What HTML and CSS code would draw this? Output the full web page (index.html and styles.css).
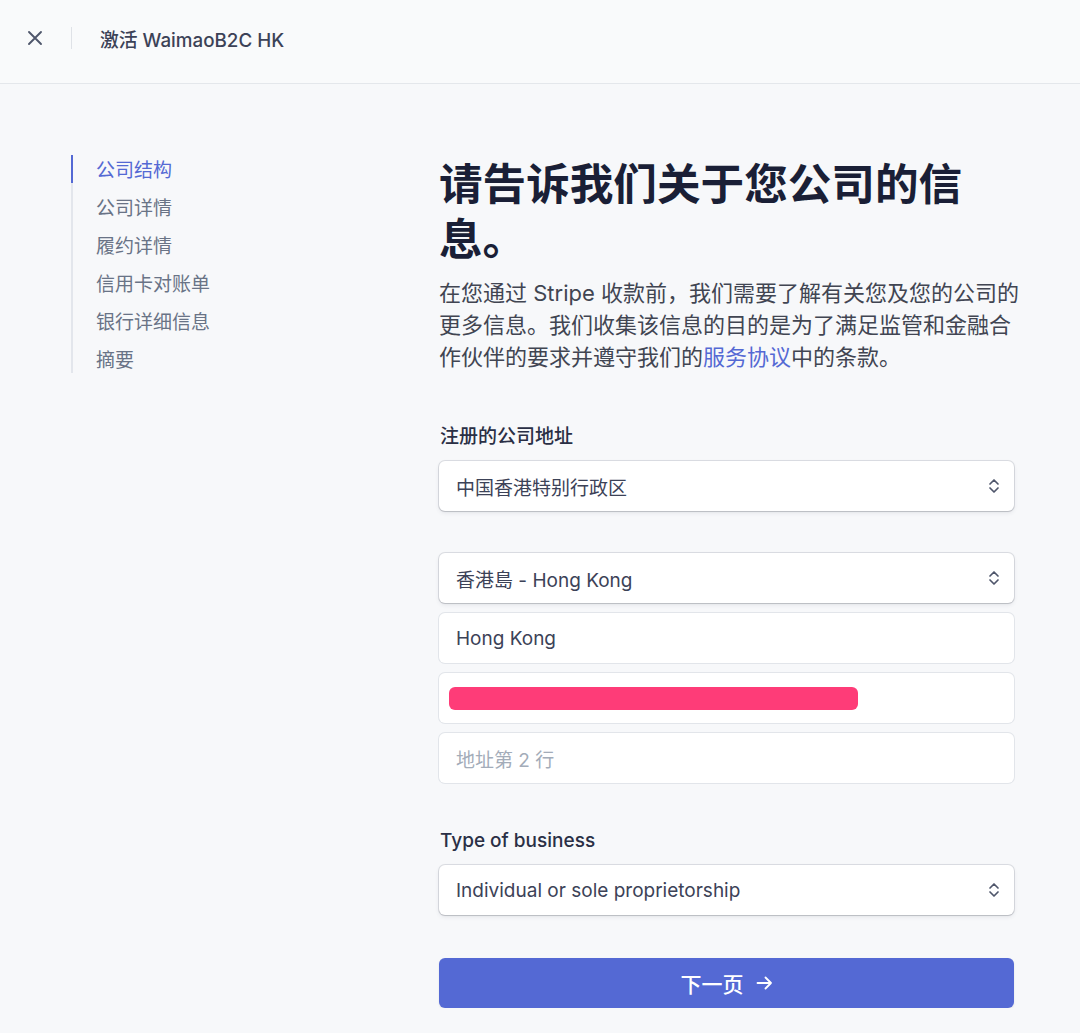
FILE: index.html
```html
<!DOCTYPE html>
<html lang="zh-CN">
<head>
<meta charset="utf-8">
<title>激活 WaimaoB2C HK</title>
<link rel="stylesheet" href="styles.css">
</head>
<body>
<header class="topbar">
  <span class="close-btn" aria-label="关闭">
    <svg width="16" height="16" viewBox="0 0 16 16"><path d="M2 2 L14 14 M14 2 L2 14" stroke="#4f566b" stroke-width="1.9" stroke-linecap="round" fill="none"/></svg>
  </span>
  <span class="divider"></span>
  <span class="title">激活 WaimaoB2C HK</span>
</header>
<div class="layout">
  <nav class="steps">
    <div class="step active">公司结构</div>
    <div class="step">公司详情</div>
    <div class="step">履约详情</div>
    <div class="step">信用卡对账单</div>
    <div class="step">银行详细信息</div>
    <div class="step">摘要</div>
  </nav>
  <main class="content">
    <h1 class="heading">请告诉我们关于您公司的信<br>息。</h1>
    <p class="intro">在您通过 Stripe 收款前，我们需要了解有关您及您的公司的<br>更多信息。我们收集该信息的目的是为了满足监管和金融合<br>作伙伴的要求并遵守我们的<a class="link" href="#">服务协议</a>中的条款。</p>

    <div class="label label-first">注册的公司地址</div>
    <div class="field select">
      <span>中国香港特别行政区</span>
      <svg class="chev" width="12" height="18" viewBox="0 0 12 18"><path d="M2 7 L6 3 L10 7 M2 11 L6 15 L10 11" stroke="#4f566b" stroke-width="1.7" stroke-linecap="round" stroke-linejoin="round" fill="none"/></svg>
    </div>

    <div class="field select field-gap">
      <span>香港島 - Hong Kong</span>
      <svg class="chev" width="12" height="18" viewBox="0 0 12 18"><path d="M2 7 L6 3 L10 7 M2 11 L6 15 L10 11" stroke="#4f566b" stroke-width="1.7" stroke-linecap="round" stroke-linejoin="round" fill="none"/></svg>
    </div>
    <div class="field input">Hong Kong</div>
    <div class="field input redacted"><span class="redact-bar"></span></div>
    <div class="field input placeholder">地址第 2 行</div>

    <div class="label label-second">Type of business</div>
    <div class="field select">
      <span>Individual or sole proprietorship</span>
      <svg class="chev" width="12" height="18" viewBox="0 0 12 18"><path d="M2 7 L6 3 L10 7 M2 11 L6 15 L10 11" stroke="#4f566b" stroke-width="1.7" stroke-linecap="round" stroke-linejoin="round" fill="none"/></svg>
    </div>

    <button class="next-btn" type="button">下一页
      <svg width="17" height="14" viewBox="0 0 17 14"><path d="M1.5 7 H15 M9.5 1.5 L15 7 L9.5 12.5" stroke="#ffffff" stroke-width="1.8" stroke-linecap="round" stroke-linejoin="round" fill="none"/></svg>
    </button>
  </main>
</div>
</body>
</html>
```

FILE: styles.css
```css
* { box-sizing: border-box; }

html, body {
  margin: 0;
  padding: 0;
  background: #f7f8fa;
  font-family: "Inter", "Noto Sans CJK SC", "Noto Sans", sans-serif;
  color: #3c4257;
}

.topbar {
  height: 84px;
  border-bottom: 1px solid #e4e7eb;
  background: #f9fafb;
  display: flex;
  align-items: center;
  padding: 0 0 7px 27px;
}

.close-btn {
  width: 16px;
  height: 16px;
  display: flex;
}

.divider {
  width: 1px;
  height: 22px;
  background: #dfe2e7;
  margin-left: 28px;
}

.title {
  margin-left: 28px;
  font-size: 18.8px;
  font-weight: 500;
  color: #3c4257;
}

.layout {
  display: flex;
  padding: 71px 0 0 71px;
}

.steps {
  width: 368px;
  flex: none;
  align-self: flex-start;
  border-left: 2px solid #e3e6ec;
  display: flex;
  flex-direction: column;
  gap: 10px;
}

.step {
  margin-left: -2px;
  border-left: 2px solid transparent;
  padding-left: 23px;
  height: 28px;
  line-height: 32px;
  font-size: 19px;
  color: #697386;
}

.step.active {
  border-left-color: #5469d4;
  color: #5469d4;
}

.content {
  width: 575px;
  flex: none;
  display: flex;
  flex-direction: column;
}

.heading {
  margin: 2px 0 0 0;
  font-size: 43.6px;
  line-height: 55px;
  font-weight: 700;
  color: #1a1f36;
  white-space: nowrap;
}

.intro {
  margin: 10px 0 0 0;
  font-size: 22px;
  line-height: 32px;
  color: #414552;
  white-space: nowrap;
}

.link {
  color: #5469d4;
  text-decoration: none;
}

.label {
  font-size: 19px;
  line-height: 26px;
  font-weight: 500;
  color: #2a2f45;
  padding-left: 1px;
}

.label-first { margin-top: 51px; }
.label-second { margin-top: 45px; }

.field {
  height: 50px;
  margin-top: 10px;
  border-radius: 6px;
  background: #ffffff;
  display: flex;
  align-items: center;
  font-size: 19px;
  color: #3c4257;
  padding: 0 14px 0 17px;
}

.label + .field { margin-top: 11px; }
.field.field-gap { margin-top: 42px; }

.select {
  justify-content: space-between;
  box-shadow: 0 0 0 1px rgba(60, 66, 87, 0.14), 0 2px 4px rgba(60, 66, 87, 0.10), 0 1px 1px rgba(0, 0, 0, 0.10);
}

.input {
  box-shadow: 0 0 0 1px #e2e5ea;
}

.placeholder {
  color: #a3acb9;
}

.redacted {
  padding-left: 10px;
}

.redact-bar {
  display: block;
  width: 409px;
  height: 23px;
  border-radius: 6px;
  background: #fe3c78;
}

.chev { flex: none; }

.next-btn {
  margin-top: 43px;
  height: 50px;
  border: none;
  border-radius: 6px;
  background: #5469d4;
  color: #ffffff;
  font-family: "Inter", "Noto Sans CJK SC", sans-serif;
  font-size: 21px;
  font-weight: 500;
  display: flex;
  align-items: center;
  justify-content: center;
  gap: 12px;
  padding-left: 6px;
  box-shadow: 0 1px 2px rgba(60, 66, 87, 0.12);
}
```
